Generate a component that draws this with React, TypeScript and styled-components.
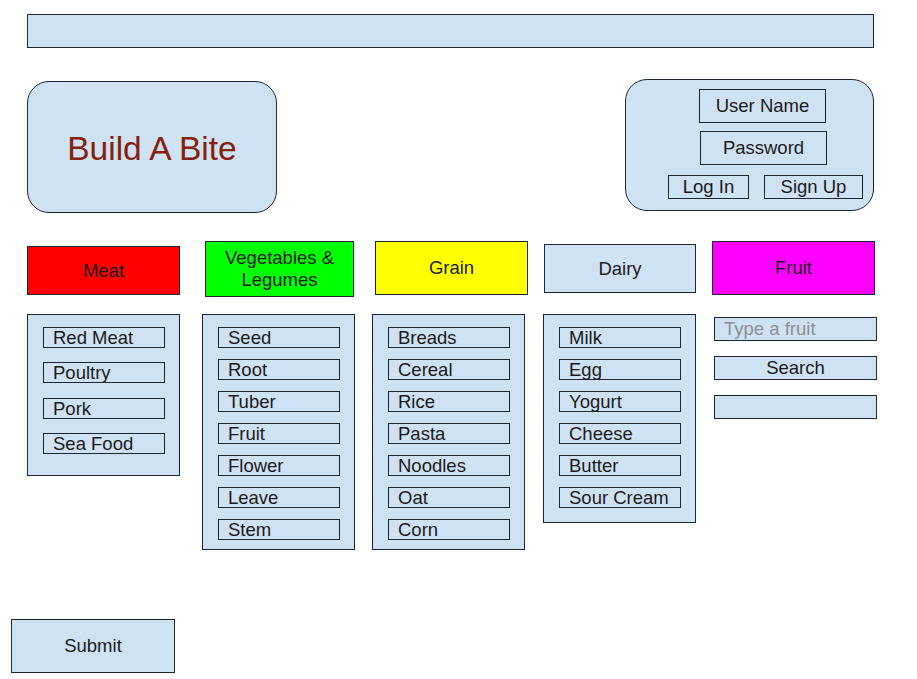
import styled, { createGlobalStyle } from 'styled-components';

const GlobalStyle = createGlobalStyle`
  body {
    margin: 0;
    background: #ffffff;
    font-family: 'Liberation Sans', Arial, sans-serif;
    color: #1a1a1a;
  }
`;

const FILL = '#cfe2f3';
const LINE = '#1c2631';

const Page = styled.div`
  width: 917px;
  height: 679px;
  padding-top: 14px;
  box-sizing: border-box;
  overflow: hidden;
`;

const TopBar = styled.div`
  margin: 0 0 0 27px;
  width: 847px;
  height: 34px;
  background: ${FILL};
  border: 1px solid ${LINE};
  box-sizing: border-box;
`;

const HeaderRow = styled.div`
  display: flex;
  justify-content: space-between;
  align-items: flex-start;
  margin: 31px 43px 0 27px;
  height: 133px;
`;

const LogoCard = styled.div`
  margin-top: 2px;
  width: 250px;
  height: 132px;
  box-sizing: border-box;
  border: 1px solid ${LINE};
  border-radius: 22px;
  background: ${FILL};
  padding-top: 3px;
  display: flex;
  align-items: center;
  justify-content: center;
  font-size: 33.5px;
  color: #85200c;
`;

const LoginCard = styled.div`
  width: 249px;
  height: 132px;
  box-sizing: border-box;
  border: 1px solid ${LINE};
  border-radius: 22px;
  background: ${FILL};
  padding-top: 9px;
  display: flex;
  flex-direction: column;
`;

const Field = styled.div<{ $x: number; $top?: number }>`
  margin-left: ${p => p.$x}px;
  margin-top: ${p => p.$top ?? 0}px;
  width: 127px;
  height: 34px;
  box-sizing: border-box;
  border: 1px solid ${LINE};
  display: flex;
  align-items: center;
  justify-content: center;
  font-size: 18.5px;
`;

const ButtonRow = styled.div`
  display: flex;
  gap: 15px;
  margin-top: 10px;
  padding-left: 42px;
`;

const SmallButton = styled.div<{ $w: number }>`
  width: ${p => p.$w}px;
  height: 24px;
  box-sizing: border-box;
  border: 1px solid ${LINE};
  display: flex;
  align-items: center;
  justify-content: center;
  font-size: 18.5px;
`;

const CategoryGrid = styled.div`
  display: grid;
  grid-template-columns: 175px 170px 171px 169px 164px;
  margin: 29px 0 0 27px;
  height: 308px;
`;

const Column = styled.div`
  display: flex;
  flex-direction: column;
`;

const HeadSlot = styled.div`
  height: 73px;
`;

const CategoryHead = styled.div<{ $bg: string; $x: number; $y: number; $w: number; $h: number }>`
  margin-left: ${p => p.$x}px;
  margin-top: ${p => p.$y}px;
  width: ${p => p.$w}px;
  height: ${p => p.$h}px;
  box-sizing: border-box;
  border: 1px solid ${LINE};
  background: ${p => p.$bg};
  display: flex;
  align-items: center;
  justify-content: center;
  text-align: center;
  font-size: 18.5px;
  line-height: 22px;
  color: #1a1a1a;
`;

const List = styled.div<{ $gap: number; $bottom: number }>`
  width: 153px;
  box-sizing: border-box;
  border: 1px solid ${LINE};
  background: ${FILL};
  padding: 12px 0 ${p => p.$bottom}px 15px;
  display: flex;
  flex-direction: column;
  gap: ${p => p.$gap}px;
`;

const Item = styled.div`
  width: 122px;
  height: 21px;
  box-sizing: border-box;
  border: 1px solid ${LINE};
  padding-left: 9px;
  font-size: 18.5px;
  line-height: 19px;
  white-space: nowrap;
`;

const FruitForm = styled.div`
  margin: 3px 0 0 2px;
  display: flex;
  flex-direction: column;
  gap: 15px;
`;

const FruitInput = styled.input`
  width: 163px;
  height: 24px;
  box-sizing: border-box;
  border: 1px solid ${LINE};
  background: ${FILL};
  padding: 0 0 0 9px;
  margin: 0;
  font-family: 'Liberation Sans', Arial, sans-serif;
  font-size: 18.5px;
  color: #1a1a1a;
  outline: none;

  &::placeholder {
    color: #8a8f94;
  }
`;

const FruitBox = styled.div`
  width: 163px;
  height: 24px;
  box-sizing: border-box;
  border: 1px solid ${LINE};
  background: ${FILL};
  display: flex;
  align-items: center;
  justify-content: center;
  font-size: 18.5px;
`;

const SubmitButton = styled.div`
  margin: 70px 0 0 11px;
  width: 164px;
  height: 54px;
  box-sizing: border-box;
  border: 1px solid ${LINE};
  background: ${FILL};
  display: flex;
  align-items: center;
  justify-content: center;
  font-size: 18.5px;
`;

const COLUMNS = [
  {
    title: 'Meat', bg: '#ff0000', x: 0, y: 5, w: 153, h: 49, gap: 14.3, bottom: 21,
    items: ['Red Meat', 'Poultry', 'Pork', 'Sea Food'],
  },
  {
    title: 'Vegetables & Legumes', bg: '#00ff00', x: 3, y: 0, w: 149, h: 56, gap: 11, bottom: 9,
    items: ['Seed', 'Root', 'Tuber', 'Fruit', 'Flower', 'Leave', 'Stem'],
  },
  {
    title: 'Grain', bg: '#ffff00', x: 3, y: 0, w: 153, h: 54, gap: 11, bottom: 9,
    items: ['Breads', 'Cereal', 'Rice', 'Pasta', 'Noodles', 'Oat', 'Corn'],
  },
  {
    title: 'Dairy', bg: FILL, x: 1, y: 3, w: 152, h: 49, gap: 11, bottom: 14,
    items: ['Milk', 'Egg', 'Yogurt', 'Cheese', 'Butter', 'Sour Cream'],
  },
];

export default function App() {
  return (
    <Page>
      <GlobalStyle />
      <TopBar />

      <HeaderRow>
        <LogoCard>Build A Bite</LogoCard>
        <LoginCard>
          <Field $x={73}>User Name</Field>
          <Field $x={74} $top={8}>Password</Field>
          <ButtonRow>
            <SmallButton $w={81}>Log In</SmallButton>
            <SmallButton $w={99}>Sign Up</SmallButton>
          </ButtonRow>
        </LoginCard>
      </HeaderRow>

      <CategoryGrid>
        {COLUMNS.map(col => (
          <Column key={col.title}>
            <HeadSlot>
              <CategoryHead $bg={col.bg} $x={col.x} $y={col.y} $w={col.w} $h={col.h}>
                {col.title === 'Vegetables & Legumes' ? (
                  <span>Vegetables &amp;<br />Legumes</span>
                ) : col.title}
              </CategoryHead>
            </HeadSlot>
            <List $gap={col.gap} $bottom={col.bottom}>
              {col.items.map(item => (
                <Item key={item}>{item}</Item>
              ))}
            </List>
          </Column>
        ))}
        <Column>
          <HeadSlot>
            <CategoryHead $bg="#ff00ff" $x={0} $y={0} $w={163} $h={54}>Fruit</CategoryHead>
          </HeadSlot>
          <FruitForm>
            <FruitInput placeholder="Type a fruit" />
            <FruitBox>Search</FruitBox>
            <FruitBox />
          </FruitForm>
        </Column>
      </CategoryGrid>

      <SubmitButton>Submit</SubmitButton>
    </Page>
  );
}
